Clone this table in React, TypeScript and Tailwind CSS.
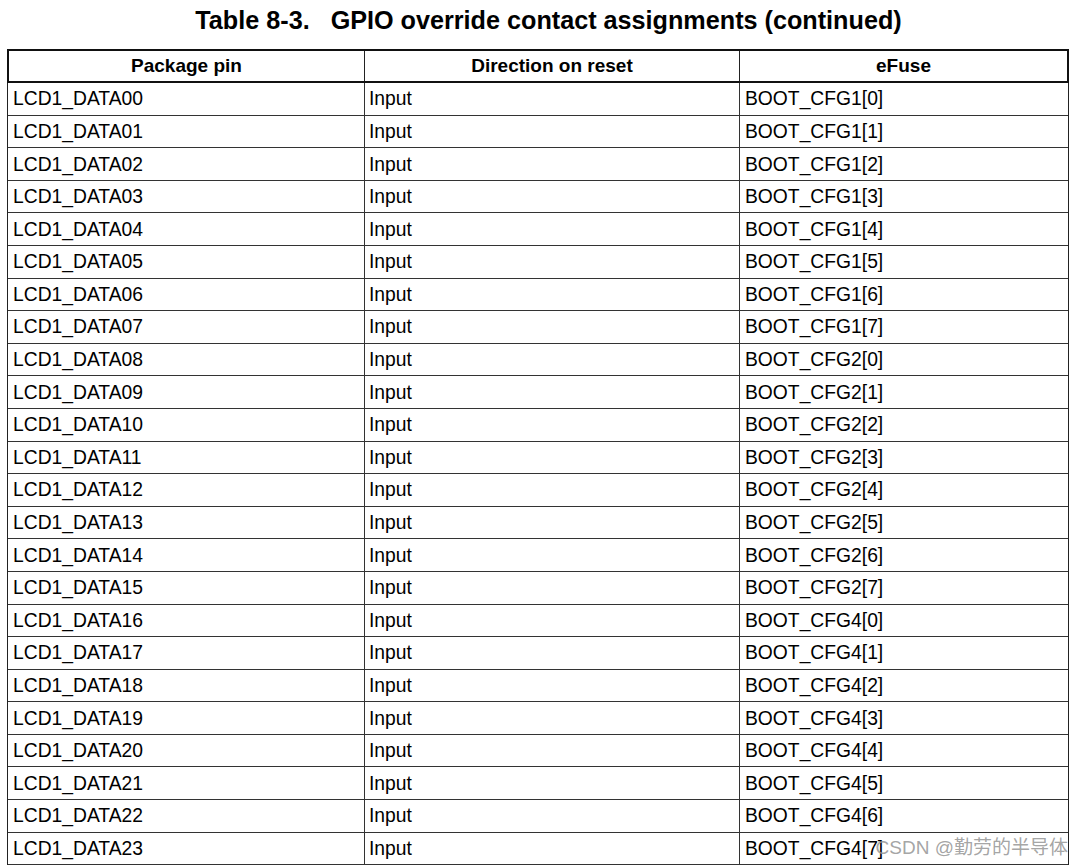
import React from 'react';

const rows = Array.from({ length: 24 }, (_, i) => {
  const n = i.toString().padStart(2, '0');
  const group = i < 8 ? 1 : i < 16 ? 2 : 4;
  return {
    pin: `LCD1_DATA${n}`,
    dir: 'Input',
    efuse: `BOOT_CFG${group}[${i % 8}]`,
  };
});

export default function App() {
  return (
    <div className="w-[1085px] h-[867px] bg-white overflow-hidden font-['Liberation_Sans',Arial,sans-serif] text-black">
      <h1 className="h-[49px] pt-[2px] text-center text-[25.2px] font-bold leading-[36px] whitespace-pre pl-[12px]">
        Table 8-3.   GPIO override contact assignments (continued)
      </h1>

      <div className="relative ml-[7px] w-[1062px]">
        {/* header */}
        <div className="flex h-[34px] border-2 border-[#111] text-[19px] font-bold">
          <div className="w-[356px] flex items-center justify-center border-r border-[#222]">Package pin</div>
          <div className="w-[375px] flex items-center justify-center border-r border-[#222]">Direction on reset</div>
          <div className="flex-1 flex items-center justify-center">eFuse</div>
        </div>

        {/* body */}
        <div className="border-x border-[#222] text-[19.3px]">
          {rows.map(r => (
            <div key={r.pin} className="flex h-[32.6px] pt-[2px] border-b border-[#333]">
              <div className="w-[357px] flex items-center pl-[5px] border-r border-[#333] -mt-[2px] pt-[2px]">{r.pin}</div>
              <div className="w-[375px] flex items-center pl-[4px] border-r border-[#333] -mt-[2px] pt-[2px]">{r.dir}</div>
              <div className="flex-1 flex items-center pl-[5px]">{r.efuse}</div>
            </div>
          ))}
        </div>

        {/* watermark */}
        <div className="absolute right-[1px] bottom-[3px] text-[19px] text-[#9a9a9a]/90 font-['Liberation_Sans','Noto_Sans_CJK_SC',sans-serif] whitespace-nowrap">
          CSDN @勤劳的半导体
        </div>
      </div>
    </div>
  );
}
